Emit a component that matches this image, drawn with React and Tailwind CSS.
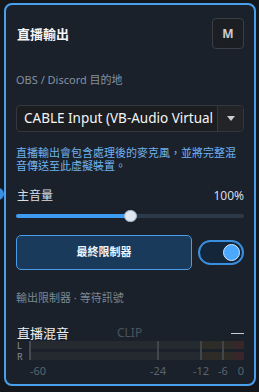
import React from "react";

const FONT = { fontFamily: '"Noto Sans", "Noto Sans CJK TC", sans-serif' };

export default function App() {
  return (
    <div className="relative w-[259px] h-[392px] bg-[#14181d] overflow-hidden" style={FONT}>
      <div className="absolute left-[-8px] top-[188px] w-[12px] h-[12px] rounded-full bg-[#3b8fe0]" />
      <div className="relative ml-[4px] mt-[3px] w-[252px] h-[383px] rounded-[8px] border-2 border-[#4aa0ec] bg-[#1a212b] px-[10px] pt-[13px] flex flex-col">
        {/* header */}
        <div className="h-[31px] flex items-center justify-between">
          <span className="text-[13px] font-bold text-[#f2f4f6] leading-[16px] pl-[1px]">直播輸出</span>
          <div className="w-[32px] h-[31px] rounded-[4px] border border-[#3a3f46] bg-[#1b1e23] flex items-center justify-center text-[12px] font-bold text-[#c9cdd2]">M</div>
        </div>
        <div className="mt-[24px] h-[14px] leading-[14px] text-[11px] text-[#8591a0]">OBS / Discord 目的地</div>
        {/* select */}
        <div className="mt-[18px] h-[27px] flex rounded-[4px] border border-[#34383e] bg-[#1b1d21] overflow-hidden">
          <div className="flex-1 min-w-0 flex items-center pl-[7px] pr-[2px] text-[13.5px] text-[#f4f5f7] whitespace-nowrap overflow-hidden">CABLE Input (VB-Audio Virtual</div>
          <div className="w-[26px] border-l border-[#34383e] bg-[#222428] flex items-center justify-center">
            <svg width="8" height="5" viewBox="0 0 8 5"><path d="M0 0H8L4 5Z" fill="#c9ccd0" /></svg>
          </div>
        </div>
        <div className="mt-[14px] text-[11px] leading-[13px] text-[#72b3ee]">直播輸出會包含處理後的麥克風，並將完整混音傳送至此虛擬裝置。</div>
        {/* volume */}
        <div className="mt-[16px] h-[16px] flex items-center justify-between text-[12px] leading-[16px] text-[#d9dde2]">
          <span className="pl-[1px]">主音量</span>
          <span>100%</span>
        </div>
        <div className="mt-[6px] h-[12px] relative flex items-center">
          <div className="w-full h-[4px] rounded-full bg-[#2c3947] flex">
            <div className="w-[114px] h-full rounded-full bg-[#3d9bf0]" />
          </div>
          <div className="absolute left-[108px] top-0 w-[13px] h-[12px] rounded-full bg-[#dde6f1] border border-[#9fb4ca]" />
        </div>
        {/* limiter */}
        <div className="mt-[13px] h-[35px] flex items-center gap-[6px]">
          <div className="w-[176px] h-[35px] rounded-[5px] border border-[#4a9be8] bg-[#1a3a5c] flex items-center justify-center text-[11px] font-bold text-[#eef3f8]">最終限制器</div>
          <div className="ml-auto w-[46px] h-[25px] rounded-full border-2 border-[#3a8ee0] bg-[#14263a] flex items-center justify-end pr-[2px]">
            <div className="w-[17px] h-[17px] rounded-full bg-[#4aa8ff] border border-[#d4e7ff]" />
          </div>
        </div>
        <div className="mt-[21px] h-[14px] leading-[14px] text-[11px] text-[#7b8793]">輸出限制器 · 等待訊號</div>
        {/* meter header */}
        <div className="mt-[20px] h-[16px] flex items-center">
          <span className="w-[101px] text-[13px] leading-[14px] text-[#eef0f2] pl-[1px]">直播混音</span>
          <span className="text-[12px] leading-[14px] text-[#4a535e]">CLIP</span>
          <span className="ml-auto w-[13px] h-[1px] bg-[#c8cdd2]" />
        </div>
        {/* meter */}
        <div className="h-[19px] flex">
          <div className="w-[13px] flex flex-col gap-[2px] pl-[1px] text-[9px] leading-[9px] text-[#8a939c]">
            <div className="h-[9px]">L</div>
            <div className="h-[9px]">R</div>
          </div>
          <div className="relative flex-1 flex flex-col gap-[3px]">
            <div className="h-[8px] flex">
              <div className="w-[172px] bg-[#252a31]" />
              <div className="w-[32px] bg-[#2e2c27]" />
              <div className="flex-1 bg-[#39262a]" />
            </div>
            <div className="h-[8px] flex">
              <div className="w-[172px] bg-[#252a31]" />
              <div className="w-[32px] bg-[#2e2c27]" />
              <div className="flex-1 bg-[#39262a]" />
            </div>
            <div className="absolute left-0 top-0 w-[2px] h-full bg-[#464b52]" />
            <div className="absolute left-[128px] top-0 w-[2px] h-full bg-[#41464d]" />
            <div className="absolute left-[171px] top-0 w-[2px] h-full bg-[#41464d]" />
            <div className="absolute left-[193px] top-0 w-[2px] h-full bg-[#41464d]" />
          </div>
        </div>
        <div className="mt-[5px] h-[12px] relative text-[11px] leading-[12px] text-[#5b646e]">
          <span className="absolute left-[14px] top-0">-60</span>
          <span className="absolute left-[142px] top-0 w-[0px] flex justify-center"><span className="whitespace-nowrap">-24</span></span>
          <span className="absolute left-[185px] top-0 w-[0px] flex justify-center"><span className="whitespace-nowrap">-12</span></span>
          <span className="absolute left-[207px] top-0 w-[0px] flex justify-center"><span className="whitespace-nowrap">-6</span></span>
          <span className="absolute right-0 top-0">0</span>
        </div>
      </div>
    </div>
  );
}
